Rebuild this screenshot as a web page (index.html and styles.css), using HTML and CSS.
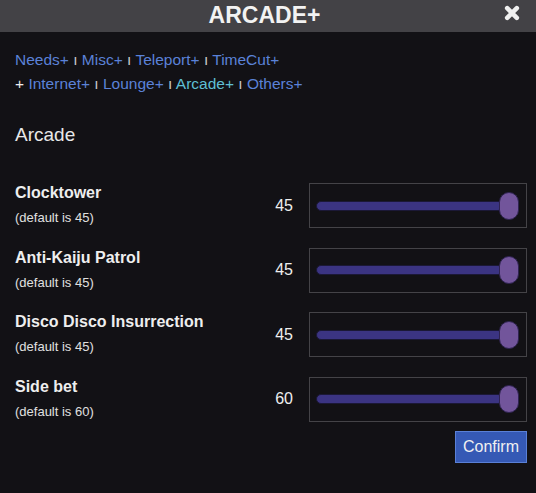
FILE: index.html
```html
<!DOCTYPE html>
<html>
<head>
<meta charset="utf-8">
<link rel="stylesheet" href="styles.css">
</head>
<body>
<div class="dialog">
  <header class="titlebar">
    <h1 class="title">ARCADE+</h1>
    <button class="close" aria-label="Close">
      <svg width="16" height="16" viewBox="0 0 16 16"><path d="M3.2 3.2 L12.8 12.8 M12.8 3.2 L3.2 12.8" stroke="#f0f0f0" stroke-width="4.6" stroke-linecap="round" fill="none"/></svg>
    </button>
  </header>
  <div class="content">
    <nav class="nav">
      <a href="#">Needs+</a> <span class="sep">ı</span> <a href="#">Misc+</a> <span class="sep">ı</span> <a href="#">Teleport+</a> <span class="sep">ı</span> <a href="#">TimeCut+</a><br>
      <span class="plus">+</span> <a href="#">Internet+</a> <span class="sep">ı</span> <a href="#">Lounge+</a> <span class="sep">ı</span> <a href="#" class="active">Arcade+</a> <span class="sep">ı</span> <a href="#">Others+</a>
    </nav>
    <h2 class="section-title">Arcade</h2>
    <div class="rows">
      <div class="row">
        <div class="label"><div class="name">Clocktower</div><div class="default">(default is 45)</div></div>
        <div class="value">45</div>
        <div class="slider"><div class="track"></div><div class="thumb"></div></div>
      </div>
      <div class="row">
        <div class="label"><div class="name">Anti-Kaiju Patrol</div><div class="default">(default is 45)</div></div>
        <div class="value">45</div>
        <div class="slider"><div class="track"></div><div class="thumb"></div></div>
      </div>
      <div class="row">
        <div class="label"><div class="name">Disco Disco Insurrection</div><div class="default">(default is 45)</div></div>
        <div class="value">45</div>
        <div class="slider"><div class="track"></div><div class="thumb"></div></div>
      </div>
      <div class="row">
        <div class="label"><div class="name">Side bet</div><div class="default">(default is 60)</div></div>
        <div class="value">60</div>
        <div class="slider"><div class="track"></div><div class="thumb"></div></div>
      </div>
    </div>
    <div class="actions"><button class="confirm">Confirm</button></div>
  </div>
</div>
</body>
</html>
```
FILE: styles.css
```css
html, body {
  margin: 0;
  padding: 0;
}
body {
  background: #121115;
  font-family: "Liberation Sans", Arial, sans-serif;
  color: #eeeeee;
  width: 536px;
  height: 493px;
  overflow: hidden;
}
.titlebar {
  position: relative;
  height: 32px;
  background: #434246;
}
.title {
  margin: 0;
  font-size: 23px;
  font-weight: bold;
  line-height: 30px;
  text-align: center;
  padding-right: 7px;
  color: #f2f2f2;
}
.close {
  position: absolute;
  top: 5px;
  right: 16px;
  width: 16px;
  height: 16px;
  padding: 0;
  border: 0;
  background: none;
  display: block;
}
.close svg {
  display: block;
}
.content {
  padding: 16px 9px 0 15px;
}
.nav {
  font-size: 15.5px;
  line-height: 24px;
}
.nav a {
  color: #5b82d8;
  text-decoration: none;
}
.nav a.active {
  color: #5fbfd3;
}
.sep {
  color: #c8c8c8;
}
.plus {
  color: #eeeeee;
}
.section-title {
  margin: 28px 0 0;
  font-size: 19px;
  font-weight: normal;
  line-height: 22px;
  color: #e8e8e8;
}
.rows {
  margin-top: 37px;
  display: flex;
  flex-direction: column;
  gap: 19.5px;
}
.row {
  display: flex;
  align-items: center;
  height: 45px;
}
.label {
  flex: 1;
  align-self: flex-start;
  padding-top: 1px;
}
.name {
  font-weight: bold;
  font-size: 16px;
  line-height: 17px;
  color: #eeeeee;
}
.default {
  margin-top: 9px;
  font-size: 13px;
  line-height: 15px;
  color: #e0e0e0;
}
.value {
  font-size: 16px;
  margin-right: 16px;
  color: #eeeeee;
}
.slider {
  box-sizing: border-box;
  width: 218px;
  height: 45px;
  border: 1px solid #444347;
  display: flex;
  align-items: center;
  padding: 0 7px 0 6px;
}
.track {
  flex: 1;
  box-sizing: border-box;
  height: 10px;
  background: #3b3482;
  border: 1px solid #1b1836;
  border-radius: 5px;
}
.thumb {
  box-sizing: border-box;
  width: 20px;
  height: 28px;
  margin-left: -4px;
  background: #72559b;
  border: 1px solid #2e2350;
  border-radius: 10px;
}
.actions {
  display: flex;
  justify-content: flex-end;
  margin-top: 9.5px;
}
.confirm {
  font-family: "Liberation Sans", Arial, sans-serif;
  font-size: 16px;
  color: #f0f0f0;
  background: #3559b5;
  border: 1px solid #5a80d6;
  height: 32px;
  padding: 0 7px;
}
```
